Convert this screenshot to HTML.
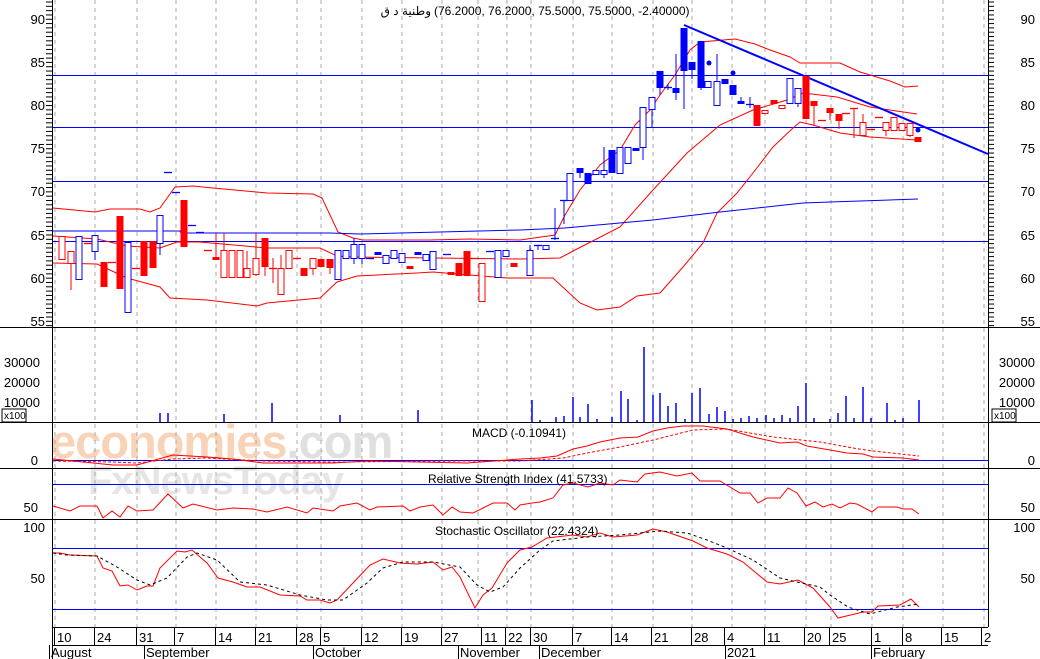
<!DOCTYPE html>
<html><head><meta charset="utf-8"><style>
html,body{margin:0;padding:0;background:#fff;}
svg{display:block;font-family:"Liberation Sans","Noto Sans CJK SC",sans-serif;}
</style></head><body>
<svg id="s" width="1040" height="659" viewBox="0 0 1040 659" xmlns="http://www.w3.org/2000/svg">
<rect width="1040" height="659" fill="#fff"/>
<text x="50" y="458" font-size="47" fill="#f8d3b8" font-weight="bold" letter-spacing="-1">economies<tspan fill="#e0e0e0">.com</tspan></text>
<text x="88" y="494" font-size="40" fill="#e5e5e5" font-weight="bold" letter-spacing="-1">FxNewsToday</text>
<g id="grid" stroke="#aaa" stroke-dasharray="4,4" stroke-width="1"></g>
<g id="hl" shape-rendering="crispEdges"></g>
<g id="lines" fill="none"></g>
<g id="cd"></g>
<g id="ax" font-size="13" fill="#000"></g>
<text x="431" y="15" font-size="12" fill="#000" text-anchor="end">وطنية د ق</text>
<text x="434" y="15" font-size="12" fill="#000">(76.2000, 76.2000, 75.5000, 75.5000, -2.40000)</text>
<text x="472" y="437" font-size="12">MACD (-0.10941)</text>
<text x="428" y="483" font-size="12">Relative Strength Index (41.5733)</text>
<text x="435" y="535" font-size="12">Stochastic Oscillator (22.4324)</text>
</svg>
<script>
const NS="http://www.w3.org/2000/svg";
function el(p,t,a,txt){const e=document.createElementNS(NS,t);for(const k in a)e.setAttribute(k,a[k]);if(txt!=null)e.textContent=txt;document.getElementById(p).appendChild(e);return e;}
function pl(pts,c,w,d){const a={points:pts.map(p=>p.join(',')).join(' '),stroke:c,'stroke-width':w||1,fill:'none'};if(d)a['stroke-dasharray']=d;el('lines','polyline',a);}
[55,95,137,176,216,256,297,321,362,402,442,478,507,531,573,612,653,692,732,765,806,831,872,903,943,984].forEach(x=>el('grid','line',{x1:x,y1:0,x2:x,y2:627}));
[75,127,181,241].forEach(y=>el('hl','line',{x1:52,y1:y+0.5,x2:988,y2:y+0.5,stroke:'#0000ff','stroke-width':1}));
[460,484,548,609].forEach(y=>el('hl','line',{x1:52,y1:y+0.5,x2:988,y2:y+0.5,stroke:'#0000ff','stroke-width':1}));
[327,422,468,519].forEach(y=>el('hl','line',{x1:0,y1:y+0.5,x2:1040,y2:y+0.5,stroke:'#000','stroke-width':1.3}));
el('hl','line',{x1:52,y1:627.5,x2:988,y2:627.5,stroke:'#000'});
el('hl','line',{x1:52.5,y1:0,x2:52.5,y2:659,stroke:'#000'});
el('hl','line',{x1:988.5,y1:0,x2:988.5,y2:627,stroke:'#000'});
pl([[53,208],[95,212],[110,209],[140,209],[150,212],[160,208],[175,187],[193,186],[213,188],[267,193],[313,194],[322,198],[338,232],[353,238],[363,240],[430,240],[470,239],[520,240],[555,235],[565,215],[580,190],[600,165],[620,150],[635,125],[650,110],[660,95],[675,75],[690,50],[700,42],[735,39],[755,44],[770,50],[790,57],[800,63],[840,63],[860,72],[870,75],[890,81],[905,87],[918,86]],'#f00');
pl([[53,236],[97,239],[127,246],[160,248],[177,242],[200,242],[267,248],[320,248],[337,256],[353,257],[520,259],[560,258],[575,250],[620,227],[653,190],[687,153],[720,125],[753,110],[787,100],[803,93],[837,97],[870,107],[917,114]],'#f00');
pl([[53,263],[97,264],[127,278],[160,287],[170,298],[207,300],[257,306],[267,303],[320,298],[337,282],[357,276],[417,273],[433,272],[507,278],[553,278],[580,303],[597,310],[620,307],[637,296],[660,293],[683,267],[703,243],[717,213],[737,193],[753,173],[773,147],[793,128],[800,122],[813,125],[840,133],[870,137],[917,140]],'#f00');
pl([[53,231],[180,231],[181,233],[330,233],[360,234],[520,230],[565,228],[653,220],[720,212],[803,203],[830,202],[918,199]],'#00f');
pl([[684,25],[988,154]],'#00f',2);
pl([[53,459],[113,465],[137,465],[173,455],[207,457],[233,459],[263,463],[297,463],[333,463],[367,461],[467,463],[520,459],[540,458],[557,456],[573,449],[587,446],[600,442],[620,438],[638,437],[653,431],[667,428],[683,426],[703,426],[727,429],[753,437],[780,443],[797,442],[807,446],[830,450],[847,453],[863,454],[873,457],[903,458],[919,460]],'#f00');
pl([[53,461],[113,462],[137,463],[173,459],[207,458],[263,461],[333,462],[467,461],[520,461],[563,458],[587,453],[620,447],[653,440],[693,430],[727,429],[773,437],[820,442],[853,448],[873,451],[919,456]],'#f00',1,'3,2');
pl([[53,506],[70,511],[80,506],[97,506],[103,518],[112,511],[120,517],[128,506],[137,511],[153,510],[168,494],[183,508],[193,504],[217,510],[233,508],[253,509],[267,512],[287,507],[307,513],[313,508],[333,511],[340,506],[357,503],[370,510],[377,507],[403,506],[410,511],[420,507],[433,505],[443,515],[452,507],[460,512],[473,513],[493,503],[507,503],[515,510],[520,505],[532,503],[540,502],[553,498],[563,485],[573,483],[588,487],[600,483],[613,485],[620,480],[637,482],[645,474],[660,472],[677,476],[692,473],[700,481],[720,481],[740,493],[750,493],[758,503],[767,498],[780,498],[788,488],[797,493],[806,506],[815,502],[823,507],[832,504],[840,508],[850,503],[857,504],[872,512],[878,507],[897,507],[903,509],[912,509],[919,514]],'#f00');
pl([[53,553],[60,553],[70,555],[97,556],[103,568],[112,571],[120,586],[128,585],[137,590],[147,586],[153,586],[160,568],[177,551],[185,552],[192,550],[207,563],[218,578],[233,582],[247,587],[260,587],[280,595],[300,596],[307,600],[320,600],[330,603],[337,600],[353,583],[370,565],[383,559],[400,563],[417,564],[433,562],[443,570],[452,567],[460,577],[475,608],[483,595],[492,588],[507,563],[520,550],[532,547],[547,538],[573,535],[587,537],[600,533],[613,537],[637,535],[653,529],[667,532],[693,541],[707,548],[727,554],[743,562],[767,582],[780,584],[798,580],[813,588],[830,607],[838,618],[863,612],[872,612],[878,606],[900,605],[911,599],[919,607]],'#f00');
pl([[53,553],[67,555],[97,556],[117,567],[137,580],[150,585],[167,578],[187,557],[197,553],[217,560],[240,582],[267,585],[300,595],[327,600],[343,600],[367,583],[383,568],[403,562],[433,562],[460,567],[477,585],[490,592],[503,587],[520,568],[540,550],[553,541],[587,537],[620,535],[640,533],[660,531],[687,533],[707,540],[727,548],[753,560],[780,578],[797,582],[820,587],[830,595],[848,607],[870,614],[897,607],[919,604]],'#000',1,'3,3');
[[160,413],[168,413],[224,414],[272,403],[340,415],[418,410],[532,400],[540,420],[556,417],[564,416],[573,397],[580,417],[588,404],[597,419],[612,417],[621,391],[628,399],[637,420],[644,347],[653,395],[660,393],[668,406],[676,403],[685,419],[692,393],[700,388],[709,414],[717,407],[725,411],[733,419],[741,418],[749,416],[757,418],[766,415],[774,418],[782,415],[790,418],[798,406],[806,383],[814,418],[830,419],[838,413],[846,396],[854,418],[863,387],[871,418],[887,403],[895,420],[903,418],[919,400]].forEach(v=>el('lines','line',{x1:v[0],y1:422,x2:v[0],y2:v[1],stroke:'#00f','stroke-width':1.5}));
const C=[[62,236,259,'r'],[71,251,263,'r',251,290],[79,236,279,'b'],[88,243,243,'d'],[95,235,251,'b',235,260],[104,262,287,'R'],[112,262,262,'d'],[120,216,289,'R'],[128,242,312,'b'],[136,268,268,'d'],[144,241,276,'R'],[153,241,268,'R'],[160,215,243,'b',215,255],[168,172,172,'D'],[176,192,192,'D'],[184,200,247,'R'],[192,225,225,'D'],[200,232,232,'D'],[208,250,250,'d'],[216,257,259,'R',233,259],[224,250,277,'r',233,277],[232,250,277,'r'],[240,250,277,'r'],[247,268,277,'r',251,277],[256,258,274,'r',234,276],[265,238,267,'R',238,276],[273,268,268,'d',258,283],[281,268,294,'r',255,294],[289,250,268,'r'],[297,258,258,'d'],[304,268,276,'R'],[313,258,268,'r',258,275],[321,259,267,'R'],[330,259,268,'R',259,274],[338,250,279,'b'],[346,250,258,'b'],[354,244,258,'b',238,264],[362,244,258,'b',244,264],[370,258,258,'D'],[378,252,255,'B'],[386,255,263,'b'],[394,250,258,'b'],[402,253,262,'b'],[410,266,268,'R'],[418,252,255,'B'],[426,254,260,'b'],[433,251,269,'b'],[447,254,254,'D'],[451,272,275,'R'],[459,263,276,'R'],[467,251,276,'R'],[475,258,258,'d'],[482,263,301,'r'],[490,251,251,'D'],[498,250,277,'b'],[506,250,256,'b'],[514,263,267,'R'],[530,250,275,'b',245,276],[538,245,245,'D',245,250],[546,245,249,'b'],[555,238,238,'D',208,240],[564,200,200,'D',200,224],[570,173,200,'b'],[580,168,173,'B',168,178],[588,173,184,'B'],[596,170,174,'b'],[604,170,174,'b',147,178],[612,150,173,'B'],[620,147,173,'b'],[628,147,163,'b'],[636,148,151,'B'],[643,107,147,'b',107,160],[652,97,109,'b',97,127],[660,71,88,'B',71,95],[668,87,87,'D',84,90],[676,88,93,'B',54,100],[684,28,71,'B',28,109],[692,62,70,'B',62,79],[701,41,88,'B',41,90],[708,81,87,'b'],[717,81,105,'b',54,105],[725,79,84,'B'],[733,85,95,'B'],[741,101,104,'B',97,104],[750,104,104,'D',97,108],[757,105,126,'R'],[765,110,113,'r'],[774,100,104,'R'],[782,105,108,'r'],[790,78,103,'b'],[798,88,103,'b',88,107],[806,76,119,'R'],[814,101,106,'R',101,126],[822,120,120,'d'],[830,108,113,'R',108,120],[839,114,121,'R',114,129],[846,113,113,'d'],[854,108,108,'d',108,138],[863,122,135,'r',114,135],[871,129,129,'d'],[879,117,117,'d'],[886,122,130,'r',122,136],[894,117,130,'r'],[902,123,130,'r'],[910,123,135,'r',123,137],[918,137,142,'R']];
C.forEach(c=>{const [x,t,b,ty,wt,wb]=c;const col=(ty==='r'||ty==='R'||ty==='d')?'#f00':'#00f';
 if(wt!=null)el('cd','line',{x1:x,y1:wt,x2:x,y2:wb,stroke:col});
 if(ty==='d'||ty==='D'){el('cd','line',{x1:x-4,y1:t+0.5,x2:x+4,y2:t+0.5,stroke:col,'stroke-width':1.3});}
 else if(ty==='R'||ty==='B'){el('cd','rect',{x:x-3.5,y:t,width:7,height:Math.max(b-t,3),fill:col});}
 else el('cd','rect',{x:x-3,y:t+0.5,width:6,height:Math.max(b-t,2),fill:'#fff',stroke:col});});
el('cd','circle',{cx:709,cy:63,r:2.5,fill:'#00f'});el('cd','circle',{cx:733,cy:73,r:2.5,fill:'#00f'});el('cd','circle',{cx:918,cy:130,r:2.5,fill:'#00f'});
function tx(x,y,s,a){el('ax','text',{x:x,y:y,'text-anchor':a||'start'},s);}
const pr=[[90,19],[85,62],[80,105],[75,148],[70,191],[65,235],[60,278],[55,321]];
pr.forEach(p=>{tx(45,p[1]+5,p[0],'end');tx(1035,p[1]+5,p[0],'end');});
for(let y=2;y<327;y+=8.63/2){el('ax','line',{x1:46,y1:y,x2:52,y2:y,stroke:'#000'});el('ax','line',{x1:988,y1:y,x2:994,y2:y,stroke:'#000'});}
[[30000,362],[20000,382],[10000,402]].forEach(p=>{tx(40,p[1]+5,p[0],'end');tx(1035,p[1]+5,p[0],'end');});
el('ax','rect',{x:2,y:409,width:24,height:13,fill:'#fff',stroke:'#000'});el('ax','text',{x:4,y:419,'font-size':10},'x100');
el('ax','rect',{x:992,y:409,width:24,height:13,fill:'#fff',stroke:'#000'});el('ax','text',{x:994,y:419,'font-size':10},'x100');
tx(38,465,'0','end');tx(1035,465,'0','end');
tx(38,512,'50','end');tx(1035,512,'50','end');
tx(45,532,'100','end');tx(1035,532,'100','end');
tx(45,583,'50','end');tx(1035,583,'50','end');
[[57,'10'],[97,'24'],[139,'31'],[177,'7'],[218,'14'],[258,'21'],[299,'28'],[323,'5'],[364,'12'],[404,'19'],[444,'27'],[484,'11'],[508,'22'],[533,'30'],[575,'7'],[614,'14'],[654,'21'],[694,'28'],[727,'4'],[767,'11'],[807,'20'],[832,'25'],[874,'1'],[905,'8'],[944,'15'],[984,'2']].forEach(d=>{tx(d[0],642,d[1]);el('ax','line',{x1:d[0]-2.5,y1:627,x2:d[0]-2.5,y2:645,stroke:'#000'});});
el('ax','line',{x1:52,y1:645.5,x2:988,y2:645.5,stroke:'#000'});
[[50,'August'],[145,'September'],[314,'October'],[459,'November'],[540,'December'],[726,'2021'],[872,'February']].forEach(m=>{tx(m[0]+1,657,m[1]);el('ax','line',{x1:m[0]-0.5,y1:645,x2:m[0]-0.5,y2:659,stroke:'#000'});});
</script>
</body></html>
